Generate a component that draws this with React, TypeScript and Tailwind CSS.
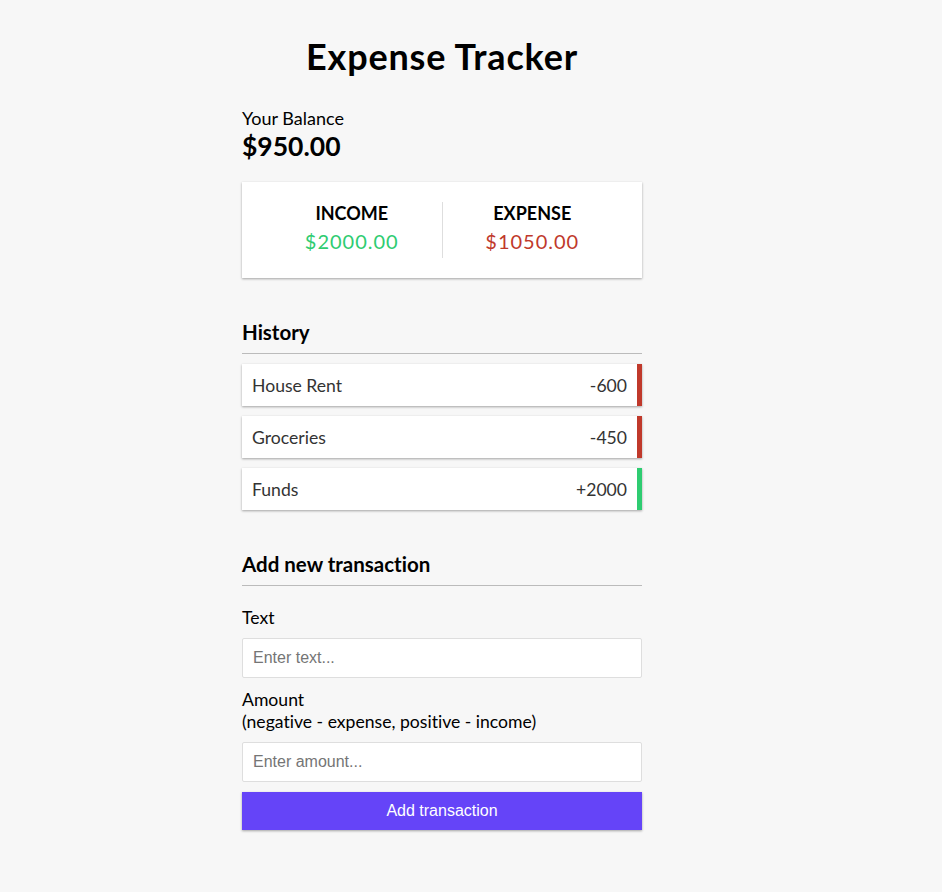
import React from 'react';

const shadow = 'shadow-[0_1px_3px_rgba(0,0,0,0.12),0_1px_2px_rgba(0,0,0,0.24)]';

const transactions = [
  { id: 1, text: 'House Rent', amount: -600 },
  { id: 2, text: 'Groceries', amount: -450 },
  { id: 3, text: 'Funds', amount: 2000 },
];

const App: React.FC = () => {
  return (
    <div className="min-h-screen bg-[#f7f7f7] font-['Lato',sans-serif] text-black [font-variant-ligatures:none]">
      <div className="w-[400px] ml-[242px] pt-[35px] pb-[30px]">
        <h2 className="text-center text-[36px] leading-[43px] font-bold tracking-[0.8px]">Expense Tracker</h2>

        <h4 className="mt-[30px] text-[18px] leading-[20px]">Your Balance</h4>
        <h1 className="mt-[2px] text-[26.5px] leading-[32px] font-bold">$950.00</h1>

        <div className={`mt-[20px] bg-white ${shadow} p-[20px] flex`}>
          <div className="flex-1 text-center border-r border-[#dedede]">
            <h4 className="text-[18px] leading-[22px] font-bold uppercase">Income</h4>
            <p className="my-[5px] text-[20px] leading-[24px] tracking-[1px] text-[#2ecc71]">$2000.00</p>
          </div>
          <div className="flex-1 text-center">
            <h4 className="text-[18px] leading-[22px] font-bold uppercase">Expense</h4>
            <p className="my-[5px] text-[20px] leading-[24px] tracking-[1px] text-[#c0392b]">$1050.00</p>
          </div>
        </div>

        <h3 className="mt-[41px] pb-[8px] border-b border-[#bbb] text-[20.5px] leading-[26px] font-bold">History</h3>
        <ul className="mt-[10px] flex flex-col gap-[10px]">
          {transactions.map((t) => (
            <li
              key={t.id}
              className={`bg-white ${shadow} text-[#333] flex justify-between px-[10px] pt-[11px] pb-[9px] text-[17.6px] leading-[22px] border-r-[5px] ${
                t.amount < 0 ? 'border-[#c0392b]' : 'border-[#2ecc71]'
              }`}
            >
              <span>{t.text}</span>
              <span>{t.amount < 0 ? '-' : '+'}{Math.abs(t.amount)}</span>
            </li>
          ))}
        </ul>

        <h3 className="mt-[41px] pb-[8px] border-b border-[#bbb] text-[20.5px] leading-[26px] font-bold">Add new transaction</h3>
        <form onSubmit={(e) => e.preventDefault()}>
          <label className="block mt-[22px] text-[17.6px] leading-[20px]">Text</label>
          <input
            type="text"
            placeholder="Enter text..."
            className="block mt-[10px] w-full h-[40px] px-[10px] bg-white border border-[#dedede] rounded-[2px] font-['Liberation_Sans',Arial,sans-serif] text-[16px] placeholder:text-[#757575] outline-none"
          />
          <label className="block mt-[11px] text-[17.6px] leading-[22px]">
            Amount <br />
            (negative - expense, positive - income)
          </label>
          <input
            type="number"
            placeholder="Enter amount..."
            className="block mt-[9px] w-full h-[40px] px-[10px] bg-white border border-[#dedede] rounded-[2px] font-['Liberation_Sans',Arial,sans-serif] text-[16px] placeholder:text-[#757575] outline-none"
          />
          <button
            type="submit"
            className={`block mt-[10px] w-full h-[38px] bg-[#6544f8] ${shadow} text-white font-['Liberation_Sans',Arial,sans-serif] text-[16px]`}
          >
            Add transaction
          </button>
        </form>
      </div>
    </div>
  );
};

export default App;
